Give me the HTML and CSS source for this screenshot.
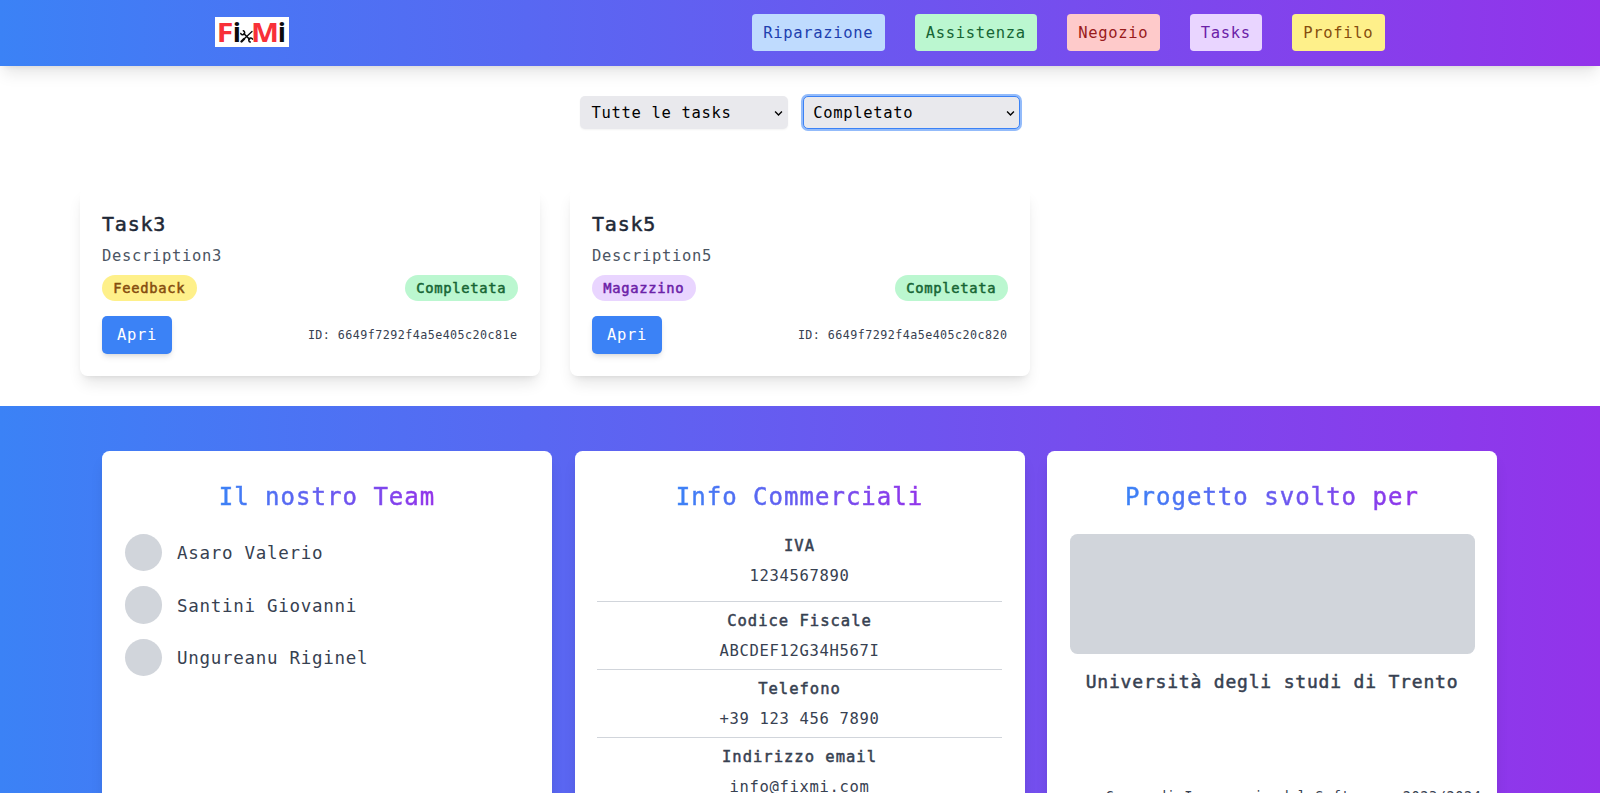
FILE: index.html
```html
<!DOCTYPE html>
<html lang="it">
<head>
<meta charset="utf-8">
<title>FixMi - Tasks</title>
<link rel="stylesheet" href="styles.css">
</head>
<body>
<header class="header">
  <svg class="logo" viewBox="0 0 74 30" role="img" aria-label="FixMi">
    <rect width="74" height="30" fill="#fff"/>
    <text class="logo-text" transform="translate(1.800 25.300) scale(1.120 1)" fill="#f83038">F</text>
    <text class="logo-text" x="17.800" y="25.300" fill="#0b0b0b">i</text>
    <text class="logo-text" transform="translate(35.900 25.300) scale(1.100 1)" fill="#f83038">M</text>
    <text class="logo-text" x="62.800" y="25.300" fill="#0b0b0b">i</text>
    <g fill="none" stroke="#0b0b0b" stroke-linecap="round">
      <path d="M29 16.800l5.500 5.500" stroke-width="1.600"/>
      <path d="M37 14.500L29.500 21.500" stroke-width="1.300"/>
      <path d="M28.300 13.800a2 2 0 1 1-2.500 2.600M35.200 25a2 2 0 1 1 2.300-2.900" stroke-width="1.500"/>
      <path d="M29 22l-2.500 2.500" stroke-width="2.400"/>
    </g>
  </svg>
  <nav class="nav">
    <a class="nav-link blue">Riparazione</a>
    <a class="nav-link green">Assistenza</a>
    <a class="nav-link red">Negozio</a>
    <a class="nav-link purple">Tasks</a>
    <a class="nav-link yellow">Profilo</a>
  </nav>
</header>

<main class="main">
  <div class="filters">
    <div class="select select-type">Tutte le tasks
      <svg class="chevron" viewBox="0 0 10 7"><path d="M1.200 1.200L5 5.200l3.800-4"/></svg>
    </div>
    <div class="select select-state">Completato
      <svg class="chevron" viewBox="0 0 10 7"><path d="M1.200 1.200L5 5.200l3.800-4"/></svg>
    </div>
  </div>

  <div class="tasks">
    <article class="task">
      <h2 class="task-title">Task3</h2>
      <p class="task-desc">Description3</p>
      <div class="row badges"><span class="badge yellow">Feedback</span><span class="badge green">Completata</span></div>
      <div class="row"><button class="open">Apri</button><span class="task-id">ID: 6649f7292f4a5e405c20c81e</span></div>
    </article>
    <article class="task">
      <h2 class="task-title">Task5</h2>
      <p class="task-desc">Description5</p>
      <div class="row badges"><span class="badge purple">Magazzino</span><span class="badge green">Completata</span></div>
      <div class="row"><button class="open">Apri</button><span class="task-id">ID: 6649f7292f4a5e405c20c820</span></div>
    </article>
  </div>
</main>

<footer class="footer">
  <section class="panel">
    <h2 class="panel-title">Il nostro Team</h2>
    <ul class="team">
      <li class="member"><span class="avatar"></span><span class="name">Asaro Valerio</span></li>
      <li class="member"><span class="avatar"></span><span class="name">Santini Giovanni</span></li>
      <li class="member"><span class="avatar"></span><span class="name">Ungureanu Riginel</span></li>
    </ul>
  </section>
  <section class="panel">
    <h2 class="panel-title">Info Commerciali</h2>
    <dl class="info">
      <div class="entry"><dt>IVA</dt><dd>1234567890</dd></div>
      <div class="entry"><dt>Codice Fiscale</dt><dd>ABCDEF12G34H567I</dd></div>
      <div class="entry"><dt>Telefono</dt><dd>+39 123 456 7890</dd></div>
      <div class="entry"><dt>Indirizzo email</dt><dd>info@fixmi.com</dd></div>
    </dl>
  </section>
  <section class="panel">
    <h2 class="panel-title">Progetto svolto per</h2>
    <div class="picture"></div>
    <p class="university">Università degli studi di Trento</p>
    <p class="course">Corso di Ingegneria del Software, 2023/2024</p>
  </section>
</footer>
</body>
</html>
```
FILE: styles.css
```css
* { box-sizing: border-box; margin: 0; padding: 0; }
html { font-size: 15px; }
body {
  height: 100vh;
  overflow: hidden;
  background: #fff;
  color: #374151;
  font-family: "DejaVu Sans Mono", "Liberation Mono", monospace;
  font-size: 15.5px;
  letter-spacing: 0.67px;
  line-height: 22.5px;
}
ul { list-style: none; }

.header {
  display: flex;
  align-items: center;
  justify-content: space-between;
  height: 66px;
  padding: 0 215px;
  background: linear-gradient(to right, #3b82f6, #9333ea);
  box-shadow: 0 10px 15px -3px rgba(0, 0, 0, .1), 0 4px 6px -4px rgba(0, 0, 0, .1);
}
.logo { width: 74px; height: 30px; margin-top: -2px; }
.logo-text { font: 700 27px "Open Sans", sans-serif; letter-spacing: 0; }
.nav { display: flex; gap: 30px; margin-top: -1px; }
.nav-link { padding: 8.5px 11.75px 6.5px 10.75px; border-radius: 3.75px; white-space: nowrap; }
.blue { background: #bfdbfe; color: #1e40af; }
.green { background: #bbf7d0; color: #166534; }
.red { background: #fecaca; color: #991b1b; }
.purple { background: #e9d5ff; color: #6b21a8; }
.yellow { background: #fef08a; color: #854d0e; }

.main { height: 340px; padding: 30px 80px 0; }
.filters { display: flex; justify-content: center; gap: 15px; margin-bottom: 59px; }
.select {
  display: flex;
  align-items: center;
  justify-content: space-between;
  height: 33px;
  padding: 1px 5px 0 11.5px;
  border-radius: 5px;
  background: #e9e9ed;
  color: #000;
  box-shadow: 0 1px 2px rgba(0, 0, 0, .05);
}
.select-type { width: 207.5px; }
.select-state { width: 217.5px; border: 1px solid #3b82f6; box-shadow: 0 0 0 2px #93bbfa; padding: 1px 4px 0 9.8px; }
.chevron { width: 9px; height: 7px; fill: none; stroke: #000; stroke-width: 1.5; }

.tasks { display: grid; grid-template-columns: repeat(3, 1fr); gap: 30px; }
.task {
  height: 188px;
  padding: 22.5px 22.5px 0 22px;
  border-radius: 7.5px;
  background: #fff;
  box-shadow: 0 10px 15px -3px rgba(0, 0, 0, .1), 0 4px 6px -4px rgba(0, 0, 0, .1);
}
.task-title, dt, .badge, .panel-title, .university { font-weight: 400; -webkit-text-stroke: .5px; }
.task-title { color: #1f2937; font-size: 20px; line-height: 26.25px; letter-spacing: .8px; }
.task-desc { margin-top: 8.5px; color: #4b5563; }
.row { display: flex; align-items: center; justify-content: space-between; }
.badges { margin: 7.5px 0 15px; }
.badge { padding: 3.5px 11.25px; border-radius: 99px; font-size: 13.8px; line-height: 18.75px; letter-spacing: .7px; }
.open {
  padding: 7.5px 15px;
  border: 0;
  border-radius: 5px;
  background: #3b82f6;
  color: #fff;
  font: inherit;
  letter-spacing: inherit;
  box-shadow: 0 4px 6px -1px rgba(0, 0, 0, .1), 0 2px 4px -2px rgba(0, 0, 0, .1);
}
.task-id { font-size: 11.7px; letter-spacing: .45px; }

.footer {
  display: grid;
  grid-template-columns: repeat(3, 450px);
  justify-content: center;
  gap: 22.5px;
  height: 387px;
  padding: 45px 1px 0 0;
  background: linear-gradient(to right, #3b82f6, #9333ea);
}
.panel {
  padding: 31px 22.5px 0;
  border-radius: 7.5px 7.5px 0 0;
  background: #fff;
  box-shadow: 0 10px 15px -3px rgba(0, 0, 0, .1), 0 4px 6px -4px rgba(0, 0, 0, .1);
}
.panel-title {
  width: fit-content;
  margin: 0 auto 21.5px;
  background: linear-gradient(to right, #3b82f6, #9333ea);
  background-clip: text;
  -webkit-background-clip: text;
  color: transparent;
  font-size: 24px;
  line-height: 30px;
  letter-spacing: 1.02px;
}
.team { display: grid; gap: 15px; }
.member { display: flex; align-items: center; gap: 15px; font-size: 17.5px; letter-spacing: .71px; }
.name { padding-top: 2px; }
.avatar { width: 37.5px; height: 37.5px; border-radius: 50%; background: #d1d5db; }
.info { text-align: center; }
.entry { padding: 8.3px 0 6.3px; border-bottom: 1px solid #d1d5db; }
.entry:first-child { padding: 1px 0 14px; }
.entry:last-child { border: 0; }
dt { margin-bottom: 7.5px; letter-spacing: 1px; }
.picture { height: 120px; border-radius: 7.5px; background: #d1d5db; }
.university { margin-top: 15.5px; text-align: center; white-space: nowrap; font-size: 18px; line-height: 26.25px; letter-spacing: .81px; }
.course { margin: 92px 0 0 36px; white-space: nowrap; font-size: 13.6px; line-height: 18.75px; letter-spacing: .56px; }
```
